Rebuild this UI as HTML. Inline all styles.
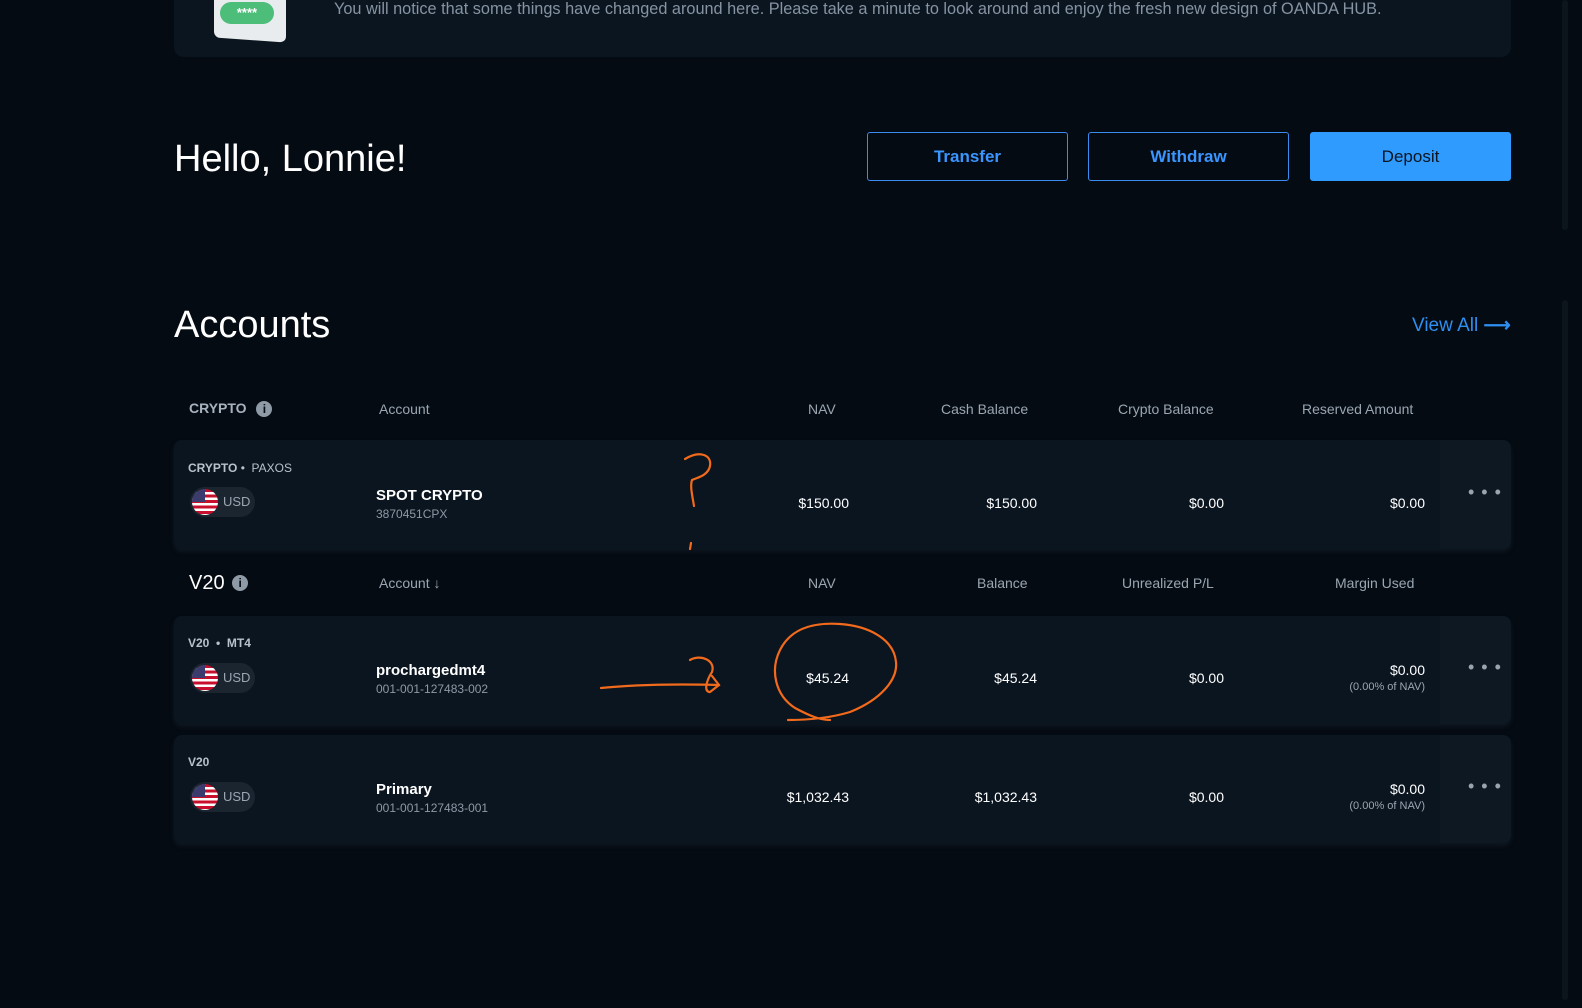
<!DOCTYPE html>
<html><head><style>
*{margin:0;padding:0;box-sizing:border-box}
body{width:1582px;height:1008px;background:#050b12;font-family:"Liberation Sans",sans-serif;position:relative;overflow:hidden;color:#fff}
.a{position:absolute;white-space:nowrap}
.card{position:absolute;left:174px;width:1337px;background:#0b1520;border-radius:8px;box-shadow:0 3px 4px rgba(20,30,40,.6)}
.menu{position:absolute;right:0;top:0;bottom:0;width:71px;background:#0d1822;border-radius:0 8px 8px 0}
.dots{position:absolute;left:28px;top:50%;margin-top:-13px;color:#9aa4ae;font-size:18px;letter-spacing:1px}
.hdr{color:#9aa6b2;font-size:14px}
.pill{position:absolute;left:16px;width:65px;height:30px;border-radius:15px;background:#1a2530}
.pill span{position:absolute;left:33px;top:7px;font-size:13px;color:#9aa6b2}
.flag{position:absolute;left:2px;top:2px;width:26px;height:26px;border-radius:50%;overflow:hidden;background:repeating-linear-gradient(#c8102e 0 3px,#fff 3px 5.5px)}
.flag:after{content:"";position:absolute;left:0;top:0;width:13px;height:13px;background:#3c3b6e}
.v{font-size:14px;color:#fff;text-align:right}
.btn{position:absolute;top:132px;width:201px;height:49px;border:1px solid #3a8cf0;border-radius:3px;color:#3a95ff;font-size:17px;font-weight:bold;text-align:center;line-height:47px}
</style></head><body>
<div class="a" style="left:174px;top:-10px;width:1337px;height:67px;background:#0b1520;border-radius:0 0 10px 10px"></div>
<div class="a" style="left:214px;top:-10px;width:72px;height:50px;background:#e9ecee;border-radius:6px;transform:skewY(4deg)"></div>
<div class="a" style="left:220px;top:2px;width:54px;height:22px;background:#4dbd7a;border-radius:11px;color:#fff;font-size:13px;font-weight:bold;text-align:center;line-height:22px">****</div>
<div class="a" style="left:334px;top:0px;font-size:16.3px;color:#8593a2">You will notice that some things have changed around here. Please take a minute to look around and enjoy the fresh new design of OANDA HUB.</div>

<div class="a" style="left:174px;top:138px;font-size:38px">Hello, Lonnie!</div>
<div class="btn" style="left:867px">Transfer</div>
<div class="btn" style="left:1088px">Withdraw</div>
<div class="btn" style="left:1310px;background:#2f9bff;border-color:#2f9bff;color:#0b1520;font-weight:normal">Deposit</div>

<div class="a" style="left:174px;top:304px;font-size:38px;font-weight:300">Accounts</div>
<div class="a" style="left:1412px;top:314px;font-size:19px;color:#2f8ff0">View All <span style="font-weight:bold">⟶</span></div>

<div class="a" style="left:189px;top:400px;font-size:14px;font-weight:bold;color:#a8b3bf">CRYPTO <span style="display:inline-block;width:16px;height:16px;border-radius:50%;background:#8e9aa6;color:#050b12;font-size:12px;text-align:center;line-height:16px;margin-left:6px">i</span></div>
<div class="a hdr" style="left:379px;top:401px">Account</div>
<div class="a hdr" style="left:808px;top:401px">NAV</div>
<div class="a hdr" style="left:941px;top:401px">Cash Balance</div>
<div class="a hdr" style="left:1118px;top:401px">Crypto Balance</div>
<div class="a hdr" style="left:1302px;top:401px">Reserved Amount</div>

<div class="card" style="top:440px;height:109px">
 <div class="a" style="left:14px;top:21px;font-size:12px;font-weight:bold;color:#b8c2cc">CRYPTO <span style="font-weight:normal">•&nbsp; PAXOS</span></div>
 <div class="pill" style="top:47px"><div class="flag"></div><span>USD</span></div>
 <div class="a" style="left:202px;top:47px;font-size:15px;font-weight:bold">SPOT CRYPTO</div>
 <div class="a" style="left:202px;top:67px;font-size:12px;color:#8d99a5">3870451CPX</div>
 <div class="a v" style="right:662px;top:55px">$150.00</div>
 <div class="a v" style="right:474px;top:55px">$150.00</div>
 <div class="a v" style="right:287px;top:55px">$0.00</div>
 <div class="a v" style="right:86px;top:55px">$0.00</div>
 <div class="menu"><div class="dots">• • •</div></div>
</div>

<div class="a" style="left:189px;top:572px;font-size:20px">V20 <span style="display:inline-block;width:16px;height:16px;border-radius:50%;background:#8e9aa6;color:#050b12;font-size:12px;text-align:center;line-height:16px;font-weight:bold;vertical-align:2px;margin-left:2px">i</span></div>
<div class="a hdr" style="left:379px;top:575px">Account ↓</div>
<div class="a hdr" style="left:808px;top:575px">NAV</div>
<div class="a hdr" style="left:977px;top:575px">Balance</div>
<div class="a hdr" style="left:1122px;top:575px">Unrealized P/L</div>
<div class="a hdr" style="left:1335px;top:575px">Margin Used</div>

<div class="card" style="top:616px;height:108px">
 <div class="a" style="left:14px;top:20px;font-size:12px;font-weight:bold;color:#b8c2cc">V20 &nbsp;•&nbsp; MT4</div>
 <div class="pill" style="top:47px"><div class="flag"></div><span>USD</span></div>
 <div class="a" style="left:202px;top:46px;font-size:15px;font-weight:bold">prochargedmt4</div>
 <div class="a" style="left:202px;top:66px;font-size:12px;color:#8d99a5">001-001-127483-002</div>
 <div class="a v" style="right:662px;top:54px">$45.24</div>
 <div class="a v" style="right:474px;top:54px">$45.24</div>
 <div class="a v" style="right:287px;top:54px">$0.00</div>
 <div class="a v" style="right:86px;top:46px">$0.00</div>
 <div class="a" style="right:86px;top:65px;font-size:11px;color:#9aa6b2">(0.00% of NAV)</div>
 <div class="menu"><div class="dots">• • •</div></div>
</div>

<div class="card" style="top:735px;height:108px">
 <div class="a" style="left:14px;top:20px;font-size:12px;font-weight:bold;color:#b8c2cc">V20</div>
 <div class="pill" style="top:47px"><div class="flag"></div><span>USD</span></div>
 <div class="a" style="left:202px;top:46px;font-size:15px;font-weight:bold">Primary</div>
 <div class="a" style="left:202px;top:66px;font-size:12px;color:#8d99a5">001-001-127483-001</div>
 <div class="a v" style="right:662px;top:54px">$1,032.43</div>
 <div class="a v" style="right:474px;top:54px">$1,032.43</div>
 <div class="a v" style="right:287px;top:54px">$0.00</div>
 <div class="a v" style="right:86px;top:46px">$0.00</div>
 <div class="a" style="right:86px;top:65px;font-size:11px;color:#9aa6b2">(0.00% of NAV)</div>
 <div class="menu"><div class="dots">• • •</div></div>
</div>

<div class="a" style="left:1562px;top:0;width:6px;height:230px;background:#0c141c;border-radius:3px"></div>
<div class="a" style="left:1562px;top:300px;width:6px;height:700px;background:#0c141c;border-radius:3px"></div>

<svg class="a" style="left:0;top:0" width="1582" height="1008" fill="none" stroke="#f26a1b" stroke-width="2.2" stroke-linecap="round">
<path d="M685 459 C700 450 712 455 710 466 C708 476 696 478 692 480 C690 486 692 494 694 506"/>
<path d="M691 543 L690 549"/>
<path d="M601 688 C640 684 680 684 719 685"/>
<path d="M690 660 C700 654 716 660 712 672 C708 678 703 690 709 692 M712 676 L719 685 L710 692"/>
<path d="M788 720 C810 720 830 718 850 712 C880 700 898 680 896 662 C894 640 870 626 840 624 C810 622 790 630 780 650 C770 670 775 695 795 708 C810 716 820 720 830 720"/>
</svg>
</body></html>
